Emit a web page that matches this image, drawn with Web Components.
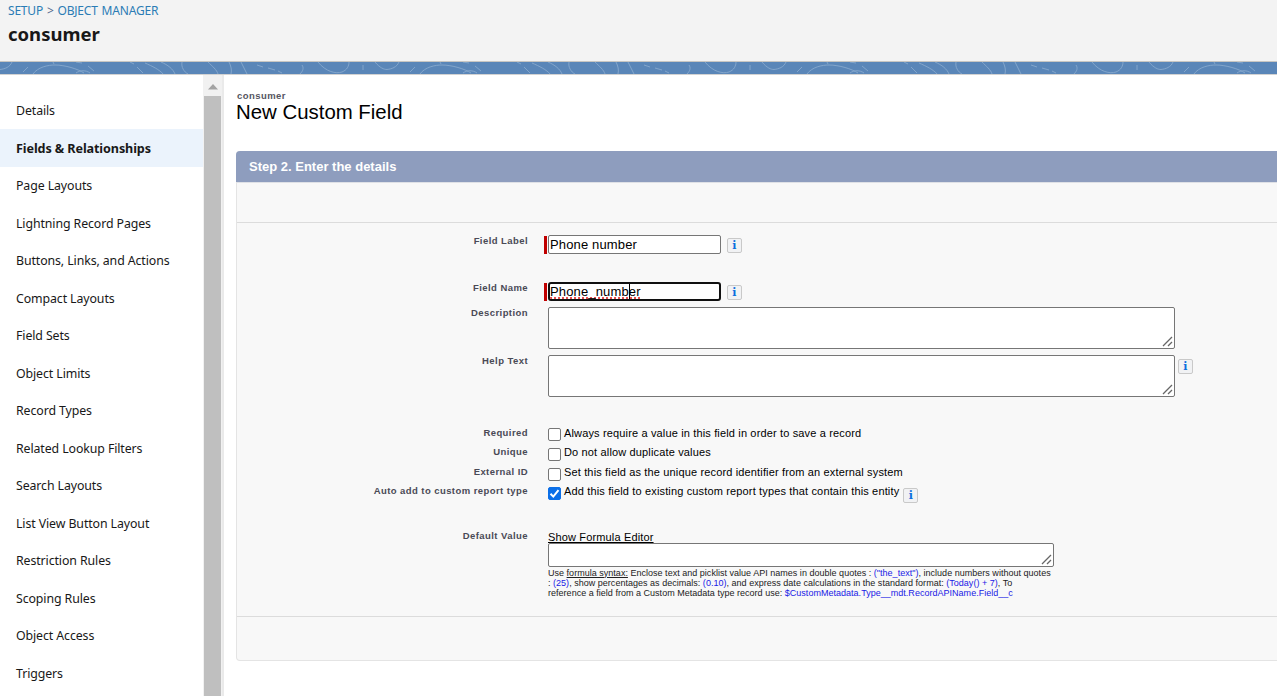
<!DOCTYPE html>
<html><head><meta charset="utf-8"><style>
html,body{margin:0;padding:0;height:696px;overflow:hidden;background:#fff}
body{font-family:"Liberation Sans",Arial,sans-serif}
</style></head><body>
<setup-page>
  <setup-header slot="header"></setup-header>
  <side-nav slot="nav">
    <nav-item>Details</nav-item><nav-item active>Fields &amp; Relationships</nav-item><nav-item>Page Layouts</nav-item>
    <nav-item>Lightning Record Pages</nav-item><nav-item>Buttons, Links, and Actions</nav-item><nav-item>Compact Layouts</nav-item>
    <nav-item>Field Sets</nav-item><nav-item>Object Limits</nav-item><nav-item>Record Types</nav-item>
    <nav-item>Related Lookup Filters</nav-item><nav-item>Search Layouts</nav-item><nav-item>List View Button Layout</nav-item>
    <nav-item>Restriction Rules</nav-item><nav-item>Scoping Rules</nav-item><nav-item>Object Access</nav-item><nav-item>Triggers</nav-item>
  </side-nav>
  <field-form slot="main"></field-form>
</setup-page>
<script>
function def(name, html, init){
  customElements.define(name, class extends HTMLElement{
    constructor(){super();this.attachShadow({mode:'open'}).innerHTML=html;}
    connectedCallback(){ if(init) init.call(this); }
  });
}
def('setup-page',`<style>
:host{display:grid;grid-template-rows:62px 13px 1fr;grid-template-columns:203px 21px 1fr;height:696px;overflow:hidden}
.hd{grid-column:1/4}.ban{grid-column:1/4}
.sb{background:#f1f1f1;border-right:2px solid #eaeaea;box-sizing:border-box;display:flex;flex-direction:column;width:21px;padding:0 1px}
.up{height:21px;display:flex;align-items:center;justify-content:center;flex:none}
.up svg{display:block;margin-top:3px}
.th{flex:1;background:#bfbfbf}
.main{overflow:hidden;min-width:0}
.nav{overflow:hidden}
.ban{background:#5a86b8;overflow:hidden;border-bottom:1px solid #d2d2d2}
.ban svg{display:block}
</style>
<div class="hd"><slot name="header"></slot></div>
<div class="ban"><svg width="1277" height="12" fill="none"><defs><pattern id="p" width="387" height="12" patternUnits="userSpaceOnUse"><path stroke="#82a5cb" stroke-width="1" d="M0 7.5C5 7 10 5 12 0M23 10L28 5M33 12C38 5 48 3 55 3C65 3 78 7 84 11M76 11C80 8 86 8 90 11M88 4L94 9M76 0L82 1M53 0L54 2M130 0L134 2M137 5L143 11M145 1C152 4 160 8 163 12M161 0C168 3 173 7 175 12M182 0C181 5 184 10 188 12M208 0C212 4 217 8 218 12M229 0C231 4 232 8 231 12M241 0L247 12M257 3L263 5M268 6L275 8M278 9L282 11M302 3C304 6 303 9 300 12M318 0C326 10 336 12 342 10C347 8 349 4 349 0M363 3L363 8M375 0C380 6 384 7.5 387 7.5"/></pattern></defs><rect width="1277" height="12" fill="url(#p)"/></svg></div>
<div class="nav"><slot name="nav"></slot></div>
<div class="sb"><div class="up"><svg width="10" height="6"><path d="M5 0L10 5.5H0Z" fill="#a3a3a3"/></svg></div><div class="th"></div></div>
<div class="main"><slot name="main"></slot></div>`);
def('setup-header',`<style>
:host{display:block;height:62px;box-sizing:border-box;background:#f3f3f3;border-bottom:1px solid #c8c6c2;padding:3px 8px 0;font-family:"Noto Sans","Open Sans",sans-serif}
.bc{font-size:12px;line-height:16px;color:#54698d;letter-spacing:-.2px;word-spacing:1px}
a{color:#2b7cb5;text-decoration:none}
h1{margin:3px 0 0;font-size:18.5px;line-height:24px;font-weight:700;color:#181818}
</style><div class="bc"><a>SETUP</a> &gt; <a>OBJECT MANAGER</a></div><h1>consumer</h1>`);
def('side-nav',`<style>:host{display:block;padding-top:16.5px}</style><slot></slot>`);
def('nav-item',`<style>
:host{display:flex;align-items:center;box-sizing:border-box;height:37.5px;padding:1.5px 0 0 16px;font:12.35px/18px "Noto Sans","Open Sans",sans-serif;color:#181818;white-space:nowrap;letter-spacing:-.1px}
:host([active]){background:#ebf3fc;font-weight:700;font-size:12.6px}
</style><slot></slot>`);
def('info-icon',`<style>
:host{display:inline-flex;width:15px;height:15px;flex:none;box-sizing:border-box;border:1px solid #c9c9c9;border-radius:2px;background:#f1f2f4;align-items:center;justify-content:center;font:700 11px/1 "DejaVu Serif","Liberation Serif",serif;color:#0b6fde}
</style>i`);
def('form-row',`<style>
:host{display:grid;grid-template-columns:291px 1fr;column-gap:20px;font:11px/14px "Liberation Sans",Arial,sans-serif;color:#000;letter-spacing:.15px}
.l{text-align:right;font-weight:700;font-size:9.5px;line-height:12px;color:#4a4a56;white-space:nowrap;letter-spacing:.43px}
.c{display:flex;align-items:flex-start;min-width:0}
</style><div class="l"><slot name="label"></slot></div><div class="c"><slot></slot></div>`);
def('text-input',`<style>
:host{display:flex;align-items:center;margin-left:-4px}
.req{width:3px;height:18px;background:#c00000;margin-right:1px;flex:none}
.in{width:173px;height:19px;box-sizing:border-box;border:1px solid #767676;border-radius:2px;background:#fff;font:13px/17px "Liberation Sans",Arial,sans-serif;letter-spacing:.15px;color:#000;padding-left:1px;white-space:nowrap;position:relative;overflow:hidden}
:host([focus]) .in{border:2px solid #101010;line-height:15px;padding-left:0;border-radius:3px}
u{text-decoration:none;display:inline-block;height:15px;background:repeating-linear-gradient(90deg,#e85050 0 2px,transparent 2px 4px) 0 13px/100% 2px no-repeat}
i{position:absolute;left:79px;top:0;bottom:0;width:1px;background:#000}
info-icon{margin-left:6px;margin-top:1px}
</style><span class="req"></span><div class="in"></div><info-icon></info-icon>`,function(){
  const v=this.getAttribute('value'),d=this.shadowRoot.querySelector('.in');
  if(d.childNodes.length)return;
  if(this.hasAttribute('focus')){const u=document.createElement('u');u.textContent=v;d.append(u,document.createElement('i'));}
  else d.textContent=v;
});
def('text-box',`<style>
:host{display:block;position:relative;box-sizing:border-box;background:#fff;border:1px solid #767676;border-radius:2px}
svg{position:absolute;right:1px;bottom:1px}
</style><svg width="11" height="11" fill="none" stroke="#666" stroke-width="1.3"><path d="M1 10L10 1M6 10L10 6"/></svg>`);
def('check-box',`<style>
:host{display:block;flex:none;width:13px;height:13px;box-sizing:border-box;border:1px solid #767676;border-radius:2px;background:#fff;margin-right:3px;margin-top:1px}
:host([checked]){background:#0b6fe8;border-color:#0b6fe8}
svg{display:none}:host([checked]) svg{display:block;margin:-1px}
</style><svg width="13" height="13" fill="none" stroke="#fff" stroke-width="2"><path d="M2.5 6.8L5.3 9.6L10.5 3.2"/></svg>`);
def('field-form',`<style>
:host{display:block;padding:15px 0 0 12px;width:1100px;font-family:"Liberation Sans",Arial,sans-serif}
.sup{font-size:9.5px;line-height:11px;font-weight:700;color:#55555f;padding-left:1px;letter-spacing:.43px}
h2{margin:0;font-size:20.4px;line-height:23px;font-weight:400;color:#000}
.panel{margin-top:27px;width:1100px;height:510px;box-sizing:border-box;background:#f8f8f8;border:1px solid #e4e4e4;border-top:0;border-radius:4px 0 0 4px;display:flex;flex-direction:column}
.bar{margin:0 0 0 -1px;height:31px;flex:none;background:#8e9dbe;border-radius:4px 0 0 0;color:#fff;font-size:13px;font-weight:700;line-height:31px;padding-left:13px}
.btns{height:39px;flex:none;border-top:1px solid #dfe1e6;border-bottom:1px solid #dcdcdc}
.body{flex:1;padding-top:12px}
.foot{height:43px;flex:none;border-top:1px solid #dcdcdc}
.ta{width:627px}
.wrap{display:flex;align-items:flex-start}
.wrap info-icon{margin:4px 0 0 3px}
.ck{white-space:nowrap;line-height:14px;margin-top:-1px}
.lnk{color:#000;text-decoration:underline;line-height:15px;margin-bottom:-2px;display:block}
.hint{font-size:9px;line-height:10px;width:506px;color:#222;letter-spacing:.02px;padding-top:.5px;white-space:nowrap}
.hint b{font-weight:400;color:#1a1ae6}
.hint u{color:#222}
.col{display:block;width:506px}
.low{margin-top:2px}
</style>
<div class="sup">consumer</div><h2>New Custom Field</h2>
<div class="panel">
<div class="bar">Step 2. Enter the details</div>
<div class="btns"></div>
<div class="body">
<form-row style="height:47px"><span slot="label">Field Label</span><text-input value="Phone number"></text-input></form-row>
<form-row style="height:25px"><span slot="label">Field Name</span><text-input value="Phone_number" focus></text-input></form-row>
<form-row style="height:48px"><span slot="label">Description</span><text-box class="ta" style="height:42px"></text-box></form-row>
<form-row style="height:72px"><span slot="label">Help Text</span><div class="wrap"><text-box class="ta" style="height:42px"></text-box><info-icon></info-icon></div></form-row>
<form-row style="height:19px"><span slot="label">Required</span><check-box></check-box><span class="ck">Always require a value in this field in order to save a record</span></form-row>
<form-row style="height:20px"><span slot="label">Unique</span><check-box class="low"></check-box><span class="ck">Do not allow duplicate values</span></form-row>
<form-row style="height:19px"><span slot="label">External ID</span><check-box class="low"></check-box><span class="ck">Set this field as the unique record identifier from an external system</span></form-row>
<form-row style="height:45px"><span slot="label">Auto add to custom report type</span><check-box class="low" checked></check-box><span class="ck">Add this field to existing custom report types that contain this entity</span><info-icon style="margin:3px 0 0 4px"></info-icon></form-row>
<form-row><span slot="label">Default Value</span><div class="col"><a class="lnk">Show Formula Editor</a><text-box style="height:24px"></text-box>
<div class="hint">Use <u>formula syntax:</u> Enclose text and picklist value API names in double quotes : <b>("the_text")</b>, include numbers without quotes<br>: <b>(25)</b>, show percentages as decimals: <b>(0.10)</b>, and express date calculations in the standard format: <b>(Today() + 7)</b>, To<br>reference a field from a Custom Metadata type record use: <b>$CustomMetadata.Type__mdt.RecordAPIName.Field__c</b></div></div></form-row>
</div>
<div class="foot"></div>
</div>`);
</script>
</body></html>
